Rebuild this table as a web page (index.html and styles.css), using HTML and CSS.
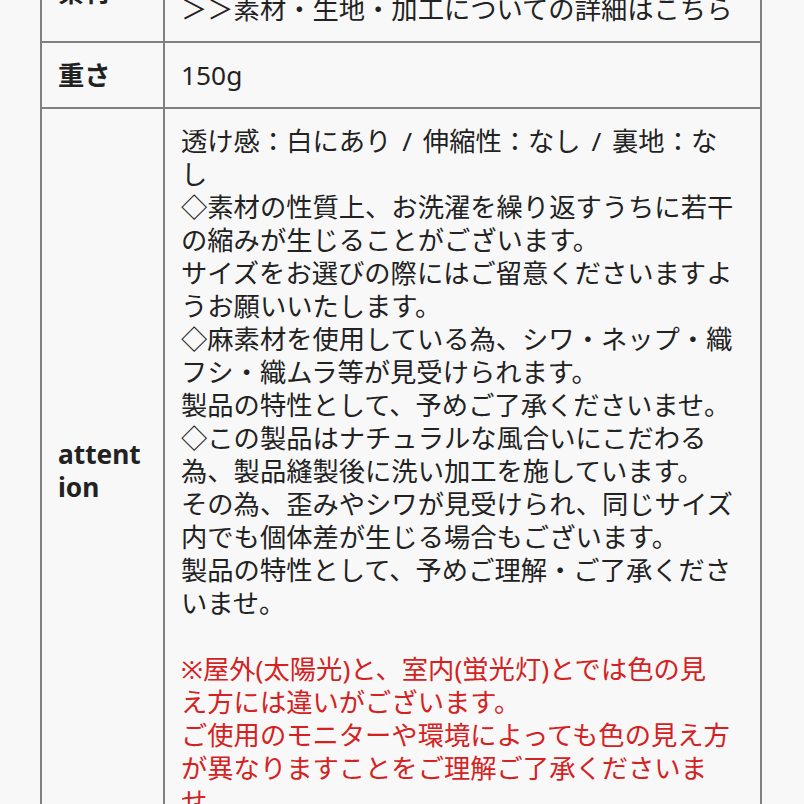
FILE: index.html
```html
<!DOCTYPE html>
<html lang="ja">
<head>
<meta charset="utf-8">
<title>商品詳細</title>
<link rel="stylesheet" href="styles.css">
</head>
<body>
<table class="spec">
  <tr>
    <th class="label">素材</th>
    <td class="value">麻100%<br>＞＞素材・生地・加工についての詳細はこちら</td>
  </tr>
  <tr>
    <th class="label">重さ</th>
    <td class="value">150g</td>
  </tr>
  <tr>
    <th class="label">attention</th>
    <td class="value">透け感：白にあり / 伸縮性：なし / 裏地：なし<br>◇素材の性質上、お洗濯を繰り返すうちに若干の縮みが生じることがございます。<br>サイズをお選びの際にはご留意くださいますようお願いいたします。<br>◇麻素材を使用している為、シワ・ネップ・織フシ・織ムラ等が見受けられます。<br>製品の特性として、予めご了承くださいませ。<br>◇この製品はナチュラルな風合いにこだわる為、製品縫製後に洗い加工を施しています。<br>その為、歪みやシワが見受けられ、同じサイズ内でも個体差が生じる場合もございます。<br>製品の特性として、予めご理解・ご了承くださいませ。<br><br><span class="note">※屋外(太陽光)と、室内(蛍光灯)とでは色の見<br>え方には違いがございます。<br>ご使用のモニターや環境によっても色の見え方が異なりますことをご理解ご了承くださいませ。</span></td>
  </tr>
</table>
</body>
</html>
```

FILE: styles.css
```css
html, body {
  margin: 0;
  padding: 0;
  background: #f8f8f8;
}

body {
  font-family: "Noto Sans", "Noto Sans CJK JP", sans-serif;
  color: #222;
  font-size: 26.3px;
  line-height: 33px;
}

.spec {
  border-collapse: collapse;
  margin: -58px 0 0 40px;
  width: 722px;
  table-layout: fixed;
}

.spec th,
.spec td {
  border: 2px solid #808080;
  vertical-align: middle;
  text-align: left;
}

.label {
  width: 84px;
  padding: 15.5px 21px 15.5px 16px;
  font-weight: bold;
  word-break: break-all;
}

.value {
  padding: 15.5px 24px 15.5px 16px;
  font-weight: normal;
  word-spacing: 4px;
}

.note {
  color: #d42222;
}
```
